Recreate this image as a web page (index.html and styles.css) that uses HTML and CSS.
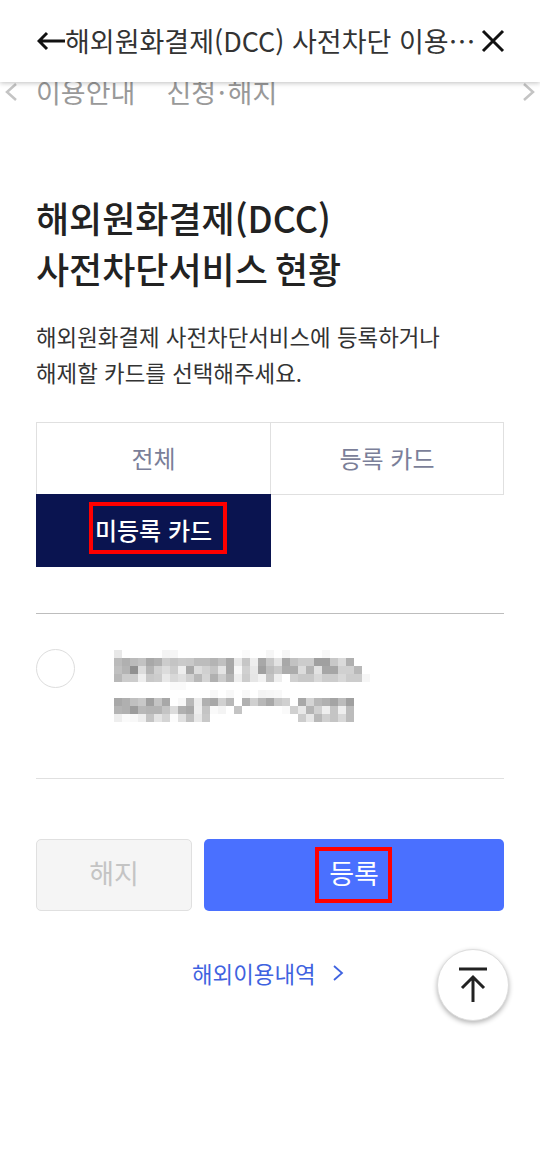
FILE: index.html
```html
<!DOCTYPE html>
<html lang="ko">
<head>
<meta charset="utf-8">
<title>해외원화결제(DCC) 사전차단 이용안내</title>
<link rel="stylesheet" href="styles.css">
</head>
<body>
<div class="page">
  <header class="topbar">
    <svg class="back" viewBox="0 0 28 20" width="28" height="20"><path d="M28 10H2M10 2l-8 8 8 8" fill="none" stroke="#111" stroke-width="3"/></svg>
    <h1 class="topbar-title">해외원화결제(DCC) 사전차단 이용…</h1>
    <svg class="close" viewBox="0 0 24 24" width="24" height="24"><path d="M2 2l20 20M22 2L2 22" fill="none" stroke="#111" stroke-width="3"/></svg>
  </header>
  <nav class="subnav">
    <svg class="chev" viewBox="0 0 14 20" width="14" height="20"><path d="M12 2L3 10l9 8" fill="none" stroke="#c4c4c4" stroke-width="2.5"/></svg>
    <span class="subnav-item">이용안내</span>
    <span class="subnav-item">신청<span class="dot">·</span>해지</span>
    <svg class="chev chev-right" viewBox="0 0 14 20" width="14" height="20"><path d="M2 2l9 8-9 8" fill="none" stroke="#c4c4c4" stroke-width="2.5"/></svg>
  </nav>
  <main class="content">
    <h2 class="title">해외원화결제(DCC)<br>사전차단서비스 현황</h2>
    <p class="desc">해외원화결제 사전차단서비스에 등록하거나<br>해제할 카드를 선택해주세요.</p>
    <div class="tabs">
      <div class="tab">전체</div>
      <div class="tab">등록 카드</div>
      <div class="tab tab-active">미등록 카드<span class="mark mark-tab"></span></div>
    </div>
    <div class="card-row">
      <span class="radio"></span>
      <div class="mosaic" id="mosaic"></div>
    </div>
    <div class="actions">
      <button class="btn btn-off">해지</button>
      <button class="btn btn-on">등록<span class="mark mark-btn"></span></button>
    </div>
    <a class="link">해외이용내역
      <svg viewBox="0 0 12 20" width="12" height="20"><path d="M2 3l8 7-8 7" fill="none" stroke="#3f63e0" stroke-width="1.8"/></svg>
    </a>
  </main>
  <button class="totop">
    <svg viewBox="0 0 32 36" width="32" height="36"><path d="M2 2h28M16 35V10M5 21l11-11 11 11" fill="none" stroke="#222" stroke-width="3"/></svg>
  </button>
</div>
<script src="mosaic.js"></script>
</body>
</html>
```
FILE: styles.css
```css
* { box-sizing: border-box; }
html, body { margin: 0; padding: 0; }
body {
  background: #fff;
  font-family: "Noto Sans CJK KR", "Noto Sans", sans-serif;
  color: #222;
}
.page { position: relative; width: 540px; height: 1160px; overflow: hidden; }
.topbar {
  position: relative;
  z-index: 2;
  height: 82px;
  background: #fff;
  display: flex;
  align-items: center;
  padding: 0 35px 0 37px;
  box-shadow: 0 1px 5px rgba(0,0,0,.25);
}
.back { flex: none; }
.topbar-title {
  flex: 1;
  min-width: 0;
  margin: 0;
  font-size: 27px;
  font-weight: 400;
  color: #333;
  white-space: nowrap;
  line-height: 36px;
}
.close { flex: none; }
.subnav {
  height: 46px;
  margin-top: -13px;
  margin-bottom: 3px;
  display: flex;
  align-items: center;
  gap: 31px;
  padding: 0 4px;
}
.subnav-item { font-size: 27px; line-height: 36px; color: #999; white-space: nowrap; }
.subnav-item:first-of-type { margin-left: -13px; }
.dot { margin: 0 2px; }
.chev-right { margin-left: auto; }
.content { padding: 0 36px; }
.title {
  margin: 77px 0 0;
  font-size: 36px;
  font-weight: 500;
  line-height: 51px;
  word-spacing: -3px;
  color: #222;
}
.desc {
  margin: 24px 0 0;
  font-size: 22.4px;
  line-height: 36px;
  color: #333;
}
.tabs {
  margin-top: 32px;
  display: grid;
  grid-template-columns: 234px 234px;
  grid-auto-rows: 72px;
}
.tab {
  position: relative;
  display: flex;
  align-items: center;
  justify-content: center;
  padding-bottom: 3px;
  font-size: 24px;
  color: #7b7f99;
  border: 1.5px solid #e0e0e0;
  margin-right: -1px;
  height: 73px;
}
.tab + .tab { border-left-width: 1px; margin-right: 0; }
.tab + .tab.tab-active {
  background: #0a1450;
  border: 0;
  color: #fff;
  font-weight: 500;
  margin-right: -1px;
}
.mark { position: absolute; border: 4px solid #f00; }
.mark-tab { left: 53px; top: 8px; width: 138px; height: 52px; }
.mark-btn { left: 111px; top: 8px; width: 77px; height: 56px; }
.card-row {
  margin-top: 47px;
  height: 166px;
  border-top: 1.5px solid #bdbdbd;
  border-bottom: 1.5px solid #e0e0e0;
  display: flex;
  padding-top: 35px;
}
.radio {
  flex: none;
  width: 39px;
  height: 39px;
  border: 1.5px solid #ddd;
  border-radius: 50%;
}
.mosaic {
  margin-left: 39px;
  margin-top: 1px;
  display: grid;
  grid-template-columns: repeat(32, 8px);
  grid-auto-rows: 8px;
}
.actions {
  margin-top: 60px;
  display: grid;
  grid-template-columns: 156px 300px;
  column-gap: 12px;
}
.btn {
  position: relative;
  height: 72px;
  border-radius: 5px;
  font: 400 27px "Noto Sans CJK KR", sans-serif;
  padding: 0 0 6px;
}
.btn-off { background: #f5f5f5; border: 1.5px solid #e0e0e0; color: #c4c4c4; }
.btn-on { background: #4a70ff; border: 0; color: #fff; }
.link {
  margin-top: 44px;
  margin-left: 156px;
  display: flex;
  align-items: center;
  gap: 16px;
  font-size: 22.4px;
  line-height: 36px;
  color: #3f63e0;
}
.totop {
  position: absolute;
  left: 437px;
  top: 949px;
  width: 72px;
  height: 72px;
  border-radius: 50%;
  background: #fff;
  border: 1px solid #ddd;
  box-shadow: 0 2px 5px rgba(0,0,0,.3);
  padding: 0;
  display: flex;
  align-items: center;
  justify-content: center;
}
```
FILE: mosaic.js
```js
var rows = [
  "e8 ff ff ff ff ff f4 f6 ff ff ff ff ff ff ff ff fa ff ff f6 ff f6 ff ff ff ff f8 ff ff",
  "bb b0 bb c2 a8 b0 cc c4 ca c8 bc bc b4 c0 a8 e8 c6 ee a8 c8 e2 a8 c2 cc cc a0 a0 c8 da b0",
  "c0 b4 90 dc b4 d0 dc cc ee a8 dc d0 c4 e4 a8 f8 d0 e8 a0 bc c8 ac ac dc b4 e2 a6 a6 d0 d0 b8",
  "b8 cc cc ee c8 cc e8 d8 e0 d0 b8 d4 b0 cc b4 ee cc e6 f2 c4 ee ff d0 c8 c8 d8 cc cc d8 cc cc f6",
  "ff ff ff ff ff ff ff fa fa ff ff ff ff ff ff ff ff ff ff ff ff ff ff ff",
  "ff ff ff ff ff ff ff ff ff ff ff ff f8 ff f8 ff f8 ff f4 f6 f8 ff ff",
  "a8 b0 c0 c8 a0 c4 a8 ff f8 b8 ec b0 a8 d0 b8 ff b0 d0 b8 a8 c8 d0 ff a8 d4 b8 b0 a4 bc a0",
  "b4 b0 9c b8 b4 b4 c4 dc b0 a8 ee c4 fa f4 ff c4 ff ff ff ff ff fa d0 e8 b4 d0 ee c4 ee bc",
  "ee fa f8 ee c4 e4 d4 fc e0 c0 e8 c8 ff ff ff ff ff ff ff ff ff ff ff cc e6 b8 d0 c4 d8 bc"
];
var box = document.getElementById("mosaic");
rows.forEach(function (row) {
  var cells = row.split(" ");
  for (var i = 0; i < 32; i++) {
    var c = document.createElement("i");
    var v = cells[i] || "ff";
    c.style.background = "#" + v + v + v;
    box.appendChild(c);
  }
});
```
